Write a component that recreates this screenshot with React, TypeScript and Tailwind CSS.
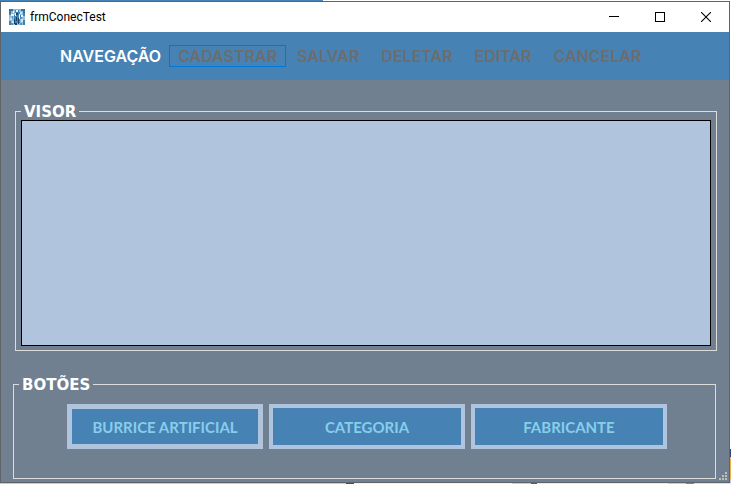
import React from "react";

const navItems = ["CADASTRAR", "SALVAR", "DELETAR", "EDITAR", "CANCELAR"];
const actions = ["BURRICE ARTIFICIAL", "CATEGORIA", "FABRICANTE"];

function AppIcon() {
  return (
    <svg width="16" height="16" viewBox="0 0 16 16" aria-hidden="true" shapeRendering="crispEdges">
      <rect width="16" height="16" fill="#8fbfdd" />
      <path d="M0 0h4v2H2v2H0zM12 0h4v4h-2V2h-2z" fill="#3b7099" />
      <path d="M0 4h2v2H0zM14 4h2v3h-2zM0 12h2v4H0zM14 11h2v5h-2z" fill="#4680a8" />
      <path d="M6 1h4v2h1v3h1v4h-1v4H6v-4H5V6h1z" fill="#3f87b8" />
      <path d="M7 1h2v2H7zM6 4h1v3H6zM10 5h1v5h-1zM2 5h3v2H2zM12 6h2v2h-2zM4 2h1v2H4z" fill="#e6f4fb" />
      <path d="M7 4h2v2H7zM7 8h1v4H7zM5 10h1v5H5zM9 9h1v6H9zM6 14h2v2H6z" fill="#1c4162" />
      <path d="M1 9h2v2H1zM3 12h2v2H3zM12 10h2v3h-2zM11 3h2v2h-2z" fill="#c8e4f3" />
      <path d="M3 7h1v3H3zM12 8h1v2h-1zM2 14h2v2H2zM11 14h2v2h-2z" fill="#5c93b8" />
    </svg>
  );
}

const captionButton = "flex h-full w-[46px] items-center justify-center";

function TitleBar() {
  return (
    <header className="flex h-[30px] items-center bg-white pl-2 text-black">
      <AppIcon />
      <h1 className="ml-[5px] flex-1 font-['Roboto',sans-serif] text-xs leading-4">frmConecTest</h1>
      <button type="button" aria-label="Minimizar" className={captionButton}>
        <svg width="10" height="10" viewBox="0 0 10 10" shapeRendering="crispEdges">
          <path d="M0 4.5h10" stroke="#000" />
        </svg>
      </button>
      <button type="button" aria-label="Maximizar" className={captionButton}>
        <svg width="10" height="10" viewBox="0 0 10 10" shapeRendering="crispEdges">
          <path d="M.5 .5h9v9h-9z" fill="none" stroke="#000" />
        </svg>
      </button>
      <button type="button" aria-label="Fechar" className={captionButton}>
        <svg width="10" height="10" viewBox="0 0 10 10">
          <path d="M0 0l10 10M10 0L0 10" stroke="#000" strokeWidth="1.1" />
        </svg>
      </button>
    </header>
  );
}

function Toolbar() {
  return (
    <nav
      aria-label="Navegação"
      className="flex h-12 items-center bg-[#4682b4] pl-[59px] font-['Inter',sans-serif] text-base leading-5 font-semibold"
    >
      <span className="mr-2 text-white">NAVEGAÇÃO</span>
      {navItems.map((item, i) => (
        <button
          key={item}
          type="button"
          className={
            i === 0
              ? "border border-[#0078d7] px-2 text-[#6d6d6d]"
              : "border border-transparent px-[10px] text-[#6d6d6d]"
          }
        >
          {item}
        </button>
      ))}
    </nav>
  );
}

const legendClass =
  "ml-[5px] px-[3px] pt-[2px] font-['DejaVu_Sans',sans-serif] text-[15px] leading-4 font-bold text-white";

function SizeGrip() {
  return (
    <svg
      width="8"
      height="8"
      viewBox="0 0 8 8"
      aria-hidden="true"
      shapeRendering="crispEdges"
      className="absolute right-[2px] bottom-[2px]"
    >
      <path d="M6 0h2v2H6zM3 3h2v2H3zM6 3h2v2H6zM0 6h2v2H0zM3 6h2v2H3zM6 6h2v2H6z" fill="#bfbfbf" />
    </svg>
  );
}

export default function App() {
  return (
    <div className="flex min-h-screen flex-col">
      <div className="flex h-px">
        <div className="w-[323px] bg-[#4682b4]" />
        <div className="flex-1 bg-white" />
      </div>
      <div className="flex flex-1">
        <div className="relative flex min-w-0 flex-1 flex-col border border-[#5f6468] bg-[#708090]">
          <TitleBar />
          <Toolbar />
          <main className="flex flex-1 flex-col pt-[22px] pr-3 pb-[3px] pl-3">
            <fieldset className="ml-[2px] flex min-w-0 flex-1 flex-col border border-[#dcdcdc]">
              <legend className={legendClass}>VISOR</legend>
              <div className="mx-[5px] mb-1 min-h-[200px] flex-1 border border-black bg-[#b0c4de]" />
            </fieldset>
            <fieldset className="mt-6 mr-px min-w-0 border border-[#dcdcdc]">
              <legend className={legendClass}>BOTÕES</legend>
              <div className="flex flex-wrap gap-[6px] pt-[11px] pb-[29px] pl-[53px]">
                {actions.map((a, i) => (
                  <button
                    key={a}
                    type="button"
                    className={`${
                      i === 0 ? "border-[5px]" : "border-4"
                    } h-[45px] w-[196px] border-[#b0c4de] bg-[#4682b4] font-['Lato',sans-serif] text-[15px] leading-5 font-bold text-[#87ceeb]`}
                  >
                    {a}
                  </button>
                ))}
              </div>
            </fieldset>
          </main>
          <SizeGrip />
        </div>
        <div className="flex w-px flex-col bg-white">
          <div className="flex-1" />
          <div className="h-2 bg-[#3c4678]" />
          <div className="h-[22px] bg-[#f0b050]" />
          <div className="h-1 bg-[#c8c8e6]" />
        </div>
      </div>
      <div className="flex h-px bg-[#dcdcf0]">
        <div className="w-[346px] bg-[#c8c8dc]" />
        <div className="w-2 bg-[#464b6e]" />
        <div className="w-[158px] bg-[#f5f0fa]" />
        <div className="w-[19px] bg-[#c8c8e6]" />
        <div className="w-[6px] bg-[#dc281e]" />
        <div className="w-[131px] bg-[#fae6c8]" />
        <div className="w-[18px] bg-[#c8c8e6]" />
        <div className="w-2 bg-[#28a0dc]" />
      </div>
    </div>
  );
}
